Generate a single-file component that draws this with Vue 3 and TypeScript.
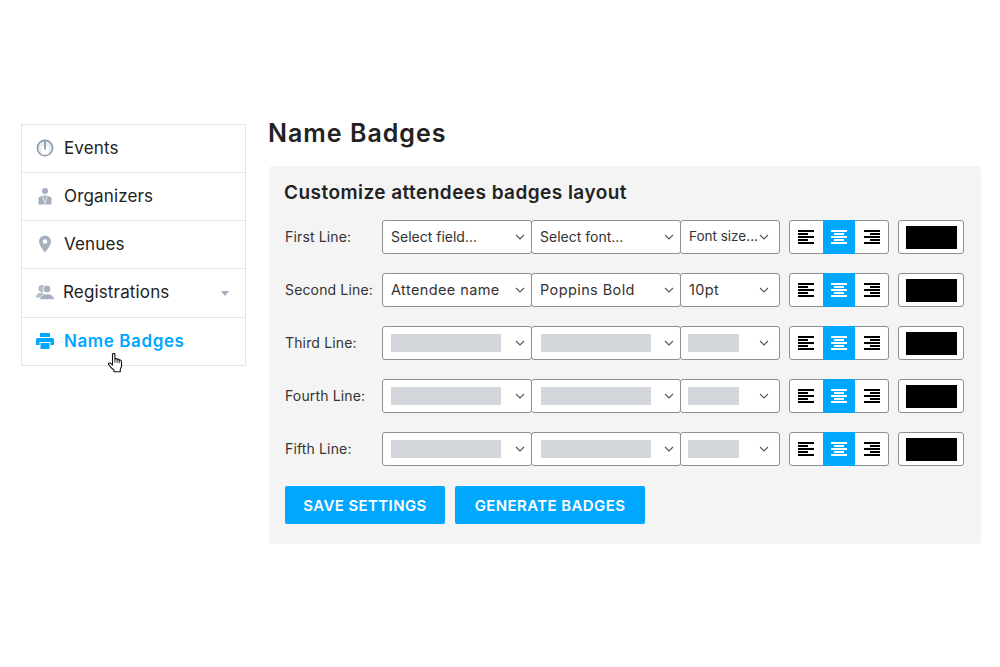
<script setup lang="ts">
interface NavItem {
  label: string
  icon: string
  active?: boolean
  caret?: boolean
}

interface BadgeLine {
  label: string
  field?: string
  font?: string
  size?: string
}

const nav: NavItem[] = [
  { label: 'Events', icon: 'gauge' },
  { label: 'Organizers', icon: 'suit' },
  { label: 'Venues', icon: 'pin' },
  { label: 'Registrations', icon: 'people', caret: true },
  { label: 'Name Badges', icon: 'printer', active: true },
]

const lines: BadgeLine[] = [
  { label: 'First Line:', field: 'Select field...', font: 'Select font...', size: 'Font size...' },
  { label: 'Second Line:', field: 'Attendee name', font: 'Poppins Bold', size: '10pt' },
  { label: 'Third Line:' },
  { label: 'Fourth Line:' },
  { label: 'Fifth Line:' },
]

const aligns = [
  { key: 'left', bars: [[0, 16], [0, 10], [0, 16], [0, 10], [0, 16]] },
  { key: 'center', bars: [[0, 16], [3, 10], [0, 16], [3, 10], [0, 16]] },
  { key: 'right', bars: [[0, 16], [6, 10], [0, 16], [6, 10], [0, 16]] },
]

const isPlaceholder = (text: string) => text.endsWith('...')
</script>

<template>
  <div class="page">
    <nav class="side">
      <a
        v-for="item in nav"
        :key="item.label"
        class="side__item"
        :class="{ 'side__item--active': item.active, 'side__item--caret': item.caret }"
      >
        <svg class="side__icon" viewBox="0 0 20 20">
          <template v-if="item.icon === 'gauge'">
            <circle cx="10" cy="10" r="7.6" fill="#e9edf2" stroke="#8d9cb0" stroke-width="1.6" />
            <path d="M6.500 16.500V11a3.500 3.500 0 0 1 7 0v5.500z" fill="#fff" />
            <path d="M10 3v8.500" stroke="#8d9cb0" stroke-width="1.800" />
          </template>
          <template v-else-if="item.icon === 'suit'">
            <circle cx="10" cy="5" r="3" fill="#a5afbd" />
            <path d="M3.500 18.500v-7L8 9.500h4l4.500 2v7z" fill="#a5afbd" />
            <path d="M7.800 10l2.200 7.500 2.200-7.500" fill="none" stroke="#e6e9ee" stroke-width="1" />
          </template>
          <path
            v-else-if="item.icon === 'pin'"
            fill="#a5afbd"
            fill-rule="evenodd"
            d="M10 1.500a6 6 0 0 0-6 6c0 4 6 11 6 11s6-7 6-11a6 6 0 0 0-6-6zm0 3.700a2.300 2.300 0 1 1 0 4.600 2.300 2.300 0 0 1 0-4.600z"
          />
          <template v-else-if="item.icon === 'people'">
            <circle cx="6.800" cy="6.500" r="3.400" fill="#b4bcc8" />
            <path d="M.6 15.500c.4-2.700 2.800-4.200 4.200-4.800h3.500v4.800z" fill="#b4bcc8" />
            <circle cx="12" cy="7" r="3.900" fill="#a5afbd" stroke="#fff" stroke-width=".9" />
            <path d="M4.500 17.500c.4-3.400 3.900-4.800 5-5.400h5c1.200.6 4.600 1.900 5 5.400z" fill="#a5afbd" stroke="#fff" stroke-width=".6" />
          </template>
          <path
            v-else
            fill="#00a7ff"
            fill-rule="evenodd"
            d="M5 2h9.500L15 3v3H5zM2.500 7h15A1.500 1.500 0 0 1 19 8.500V14h-3.500v-3h-11v3H1V8.500A1.500 1.500 0 0 1 2.500 7zM5.500 12h9v6h-9z"
          />
        </svg>
        <span class="side__label">{{ item.label }}</span>
        <span v-if="item.caret" class="side__caret"></span>
        <svg v-if="item.active" class="side__cursor" viewBox="0 0 15 20">
          <path
            d="M4.500 1.500c0-1.500 2.400-1.500 2.400 0v4.700c.1-1 2.100-1 2.200 0v.6c.2-1 2-1 2.100.1v.7c.3-.9 2-.8 2.100.4c.2 1.500.3 3.300.2 5c-.1 1.500-.8 2.300-1.200 3.500v2.300H6v-1.800C4.500 16 1.800 13.500.6 11.500c-.6-1.100.7-2.100 1.800-1.300l2.100 1.900z"
            fill="#fff"
            stroke="#111"
            stroke-width="1.100"
            stroke-linejoin="round"
          />
          <path d="M6.900 6.200v3.500M9.100 6.800v3M11.200 7.600v2.500" stroke="#111" stroke-width=".9" fill="none" />
        </svg>
      </a>
    </nav>

    <main class="main">
      <h1 class="main__title">Name Badges</h1>
      <section class="panel">
        <h2 class="panel__title">Customize attendees badges layout</h2>

        <div v-for="line in lines" :key="line.label" class="row">
          <label class="row__label">{{ line.label }}</label>

          <div class="selects">
            <div class="select select--wide">
              <span v-if="line.field" class="select__text" :class="{ 'select__text--hint': isPlaceholder(line.field) }">{{ line.field }}</span>
              <span v-else class="select__blank"></span>
              <svg class="select__chev" viewBox="0 0 10 6"><path d="M1 1l4 4 4-4" /></svg>
            </div>
            <div class="select select--wide select--font">
              <span v-if="line.font" class="select__text" :class="{ 'select__text--hint': isPlaceholder(line.font) }">{{ line.font }}</span>
              <span v-else class="select__blank"></span>
              <svg class="select__chev" viewBox="0 0 10 6"><path d="M1 1l4 4 4-4" /></svg>
            </div>
            <div class="select select--size">
              <span v-if="line.size" class="select__text" :class="{ 'select__text--tight': isPlaceholder(line.size) }">{{ line.size }}</span>
              <span v-else class="select__blank select__blank--small"></span>
              <svg class="select__chev" viewBox="0 0 10 6"><path d="M1 1l4 4 4-4" /></svg>
            </div>
          </div>

          <div class="aligns">
            <button
              v-for="a in aligns"
              :key="a.key"
              class="aligns__btn"
              :class="{ 'aligns__btn--on': a.key === 'center' }"
            >
              <svg viewBox="0 0 16 15" width="16" height="15">
                <rect v-for="(b, i) in a.bars" :key="i" :x="b[0]" :y="i * 3" :width="b[1]" height="2" />
              </svg>
            </button>
          </div>

          <div class="swatch"><span class="swatch__fill"></span></div>
        </div>

        <div class="actions">
          <button class="btn btn--save">SAVE SETTINGS</button>
          <button class="btn btn--gen">GENERATE BADGES</button>
        </div>
      </section>
    </main>
  </div>
</template>

<style scoped>
.page {
  display: flex;
  align-items: flex-start;
  gap: 22px;
  width: 1000px;
  height: 667px;
  padding: 118px 19px 0 21px;
  box-sizing: border-box;
  background: #fff;
  color: #222;
  font-family: Inter, "Noto Sans", "Liberation Sans", sans-serif;
}

.side {
  width: 225px;
  flex: none;
  margin-top: 6px;
  border: 1px solid #e4e4e4;
  box-sizing: border-box;
}

.side__item {
  position: relative;
  display: flex;
  align-items: center;
  height: 48px;
  padding: 0 0 2px 13px;
  border-bottom: 1px solid #e4e4e4;
  box-sizing: border-box;
  font-size: 17px;
  letter-spacing: 0.15px;
  color: #222;
}

.side__item:last-child {
  height: 47px;
  border-bottom: none;
}

.side__icon {
  width: 20px;
  height: 20px;
  flex: none;
  margin-right: 9px;
}

.side__item--caret {
  height: 49px;
}

.side__item--caret .side__label {
  margin-left: -1px;
}

.side__item--active {
  color: #00a7ff;
  font-weight: 600;
  letter-spacing: 0.6px;
}

.side__caret {
  margin-left: auto;
  margin-right: 16px;
  margin-top: 3px;
  border-left: 4.500px solid transparent;
  border-right: 4.500px solid transparent;
  border-top: 5px solid #a5afbd;
}

.side__cursor {
  position: absolute;
  left: 86px;
  top: 35px;
  width: 15px;
  height: 20px;
}

.main {
  flex: 1;
  min-width: 0;
}

.main__title {
  margin: 0 0 18px;
  height: 30px;
  font-size: 25px;
  line-height: 30px;
  font-weight: 600;
  letter-spacing: 1px;
  color: #222;
}

.panel {
  margin-left: 1px;
  height: 378px;
  padding: 16px 17px 0 16px;
  box-sizing: border-box;
  background: #f4f4f4;
  border-radius: 4px;
}

.panel__title {
  margin: 0 0 16px -1px;
  height: 22px;
  font-size: 19px;
  line-height: 22px;
  font-weight: 600;
  letter-spacing: 0.45px;
  color: #222;
}

.row {
  display: flex;
  align-items: center;
  height: 34px;
  margin-bottom: 19px;
}

.row__label {
  width: 97px;
  flex: none;
  padding-bottom: 2px;
  font-size: 14px;
  letter-spacing: 0.15px;
  color: #333;
}

.selects {
  display: flex;
  flex: none;
}

.select {
  position: relative;
  display: flex;
  align-items: center;
  height: 34px;
  padding-left: 8px;
  box-sizing: border-box;
  background: #fff;
  border: 1px solid #8f8f8f;
  border-radius: 3px;
  font-size: 14.500px;
  color: #333;
}

.select--wide {
  width: 150px;
  margin-right: -1px;
}

.select--size {
  width: 100px;
}

.select--font .select__blank {
  margin-left: 1px;
}

.select--size .select__blank {
  margin-left: -1px;
}

.select--size .select__chev {
  right: 10px;
}

.select__text {
  padding-bottom: 2px;
  white-space: nowrap;
  letter-spacing: 0.4px;
}

.select__text--hint {
  font-size: 14px;
  letter-spacing: 0;
}

.select__text--tight {
  font-size: 13.500px;
  letter-spacing: 0;
}

.select__blank {
  width: 110px;
  height: 18px;
  background: #d3d6da;
}

.select__blank--small {
  width: 51px;
}

.select__chev {
  position: absolute;
  right: 6px;
  top: 13px;
  width: 10px;
  height: 6px;
  fill: none;
  stroke: #555;
  stroke-width: 1.100;
}

.aligns {
  display: flex;
  flex: none;
  width: 100px;
  height: 34px;
  margin-left: 9px;
  box-sizing: border-box;
  background: #fff;
  border: 1px solid #8f8f8f;
  border-radius: 3px;
}

.aligns__btn {
  display: flex;
  align-items: center;
  justify-content: center;
  flex: 1;
  margin: 0;
  padding: 0;
  background: none;
  border: none;
  fill: #000;
}

.aligns__btn--on {
  margin: -1px 0;
  background: #00a7ff;
  fill: #fff;
}

.swatch {
  display: flex;
  align-items: center;
  justify-content: center;
  width: 66px;
  height: 34px;
  margin-left: 9px;
  box-sizing: border-box;
  background: #fff;
  border: 1px solid #8f8f8f;
  border-radius: 3px;
}

.swatch__fill {
  width: 51px;
  height: 23px;
  background: #000;
}

.actions {
  display: flex;
  gap: 10px;
  margin-top: 20px;
}

.btn {
  height: 38px;
  padding: 0;
  background: #00a7ff;
  border: none;
  border-radius: 2px;
  color: #fff;
  font-family: inherit;
  font-size: 15px;
  font-weight: 600;
  letter-spacing: 0.4px;
}

.btn--save {
  width: 160px;
}

.btn--gen {
  width: 190px;
}
</style>
